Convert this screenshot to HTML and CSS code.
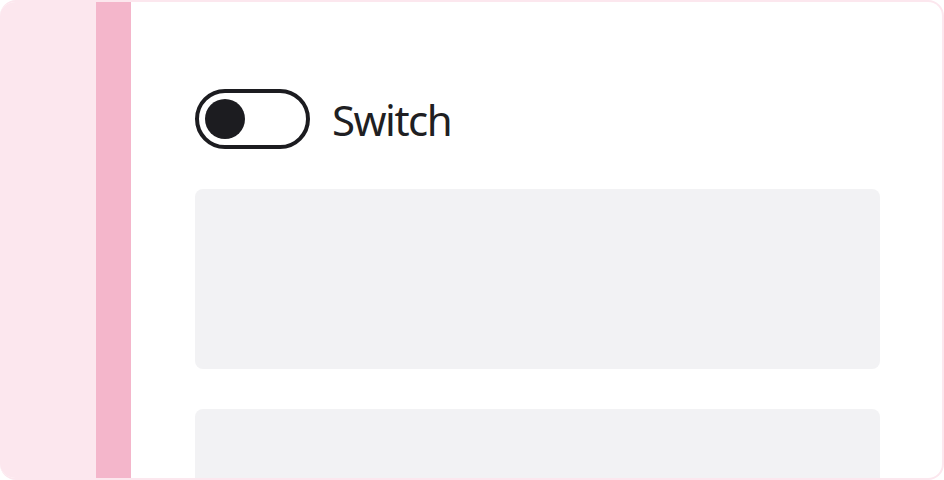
FILE: index.html
```html
<!DOCTYPE html>
<html lang="en">
<head>
  <meta charset="UTF-8">
  <title>Switch</title>
  <link rel="stylesheet" href="styles.css">
</head>
<body>
  <div class="frame">
    <div class="gutter"></div>
    <div class="rail"></div>
    <div class="content">
      <label class="switch-row">
        <span class="switch"><span class="knob"></span></span>
        <span class="switch-label">Switch</span>
      </label>
      <div class="block"></div>
      <div class="block"></div>
    </div>
  </div>
</body>
</html>
```

FILE: styles.css
```css
html, body {
  margin: 0;
  height: 100%;
}
body {
  font-family: "Noto Sans", sans-serif;
  background: #fff;
}
.frame {
  box-sizing: border-box;
  height: 480px;
  display: flex;
  border: 2px solid #fce7ee;
  border-left: none;
  border-radius: 16px;
  overflow: hidden;
}
.gutter {
  width: 96px;
  background: #fce7ee;
}
.rail {
  width: 35px;
  background: #f4b6cb;
}
.content {
  flex: 1;
  padding: 87px 62px 0 64px;
  display: flex;
  flex-direction: column;
  gap: 40px;
}
.switch-row {
  display: flex;
  align-items: center;
  gap: 22px;
}
.switch {
  box-sizing: border-box;
  width: 115px;
  height: 60px;
  border: 4px solid #1c1c20;
  border-radius: 30px;
  padding: 6px;
  display: flex;
}
.knob {
  width: 40px;
  height: 40px;
  border-radius: 50%;
  background: #1c1c20;
}
.switch-label {
  font-size: 42px;
  letter-spacing: -1.5px;
  color: #1f1f23;
}
.block {
  flex: none;
  height: 180px;
  background: #f2f2f4;
  border-radius: 8px;
}
```
